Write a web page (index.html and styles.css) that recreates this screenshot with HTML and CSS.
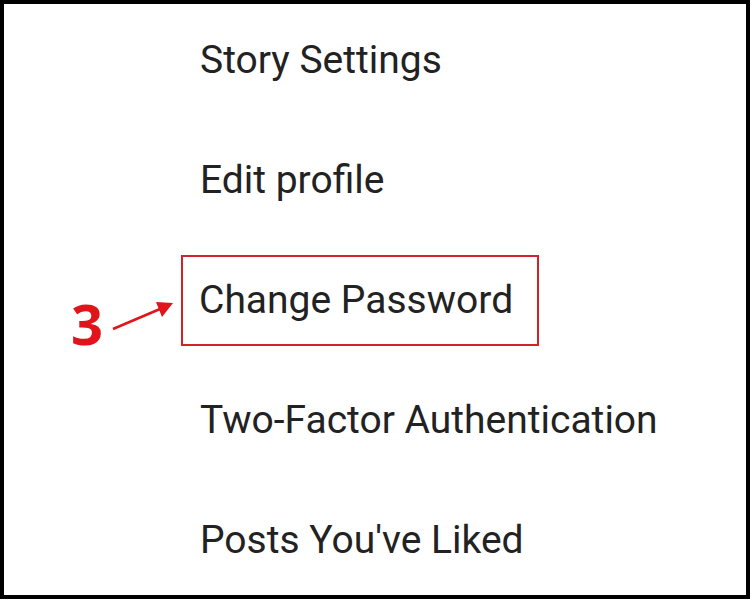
FILE: index.html
```html
<!DOCTYPE html>
<html lang="en">

<head>
    <meta charset="UTF-8">
    <meta name="viewport" content="width=device-width, initial-scale=1.0">
    <title>Settings</title>
    <link rel="stylesheet" href="styles.css">
</head>

<body>
    <div class="frame">
        <ul class="menu">
            <li class="menu-item">Story Settings</li>
            <li class="menu-item">Edit profile</li>
            <li class="menu-item highlight">
                <span class="mark">Change Password</span>
                <!-- step callout -->
                <span class="step">3</span>
                <svg class="arrow" width="80" height="50" viewBox="0 0 80 50">
                    <line x1="13" y1="37" x2="60" y2="17" stroke="#e0141b" stroke-width="2.5" />
                    <polygon points="73,11 56,10 62,25" fill="#e0141b" />
                </svg>
            </li>
            <li class="menu-item">Two-Factor Authentication</li>
            <li class="menu-item">Posts You've Liked</li>
        </ul>
    </div>
</body>

</html>
```

FILE: styles.css
```css
html,
body {
    margin: 0;
    padding: 0;
    background: #fff;
}

ul,
li {
    list-style: none;
    margin: 0;
    padding: 0;
}

.frame {
    position: relative;
    width: 750px;
    height: 599px;
    box-sizing: border-box;
    border: 4px solid #000;
    overflow: hidden;
}

.menu {
    margin-top: -4px;
    padding-left: 196px;
}

.menu-item {
    position: relative;
    height: 120px;
    line-height: 120px;
    font-family: Roboto, "Noto Sans", sans-serif;
    font-size: 39px;
    color: #222;
    white-space: nowrap;
}

/* red box round the item */
.mark {
    display: inline-block;
    line-height: 87px;
    margin-left: -19px;
    padding: 0 24px 0 16px;
    border: 2.5px solid #d3232a;
}

.step {
    position: absolute;
    left: -129px;
    top: 23px;
    font-family: "Open Sans", "Liberation Sans", sans-serif;
    font-weight: 700;
    font-size: 56px;
    color: #e0141b;
    line-height: 120px;
}

.arrow {
    position: absolute;
    left: -100px;
    top: 52px;
}
```
